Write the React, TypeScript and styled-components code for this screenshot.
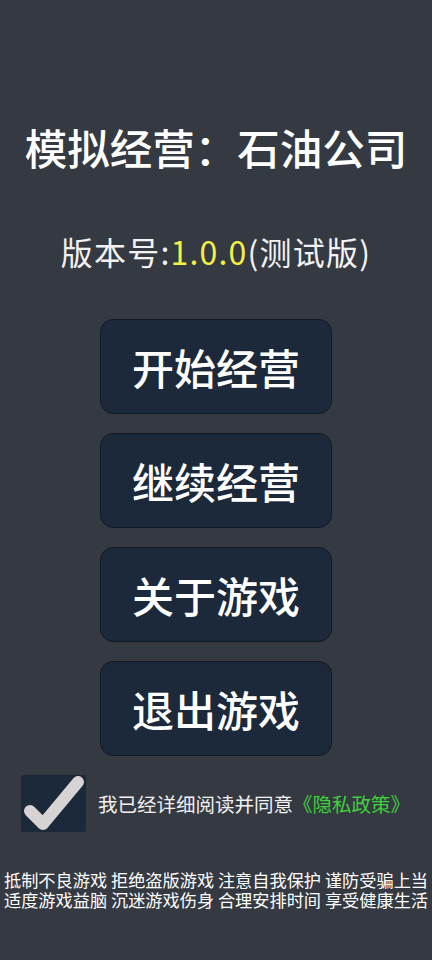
import React, { useState } from "react";
import styled, { createGlobalStyle } from "styled-components";

const Global = createGlobalStyle`
  html, body { margin: 0; padding: 0; background: #353942; }
  body { font-family: "Noto Sans CJK SC", "Noto Sans", sans-serif; }
`;

const Page = styled.div`
  width: 432px;
  min-height: 960px;
  background: #353942;
  display: flex;
  flex-direction: column;
  align-items: center;
  box-sizing: border-box;
  padding-top: 117px;
`;

const Title = styled.h1`
  margin: 0;
  font-size: 42.5px;
  line-height: 60px;
  font-weight: 500;
  color: #ffffff;
  white-space: nowrap;
`;

const Version = styled.div`
  margin-top: 54px;
  font-size: 32px;
  letter-spacing: 1.2px;
  line-height: 40px;
  color: #f2f2f2;
  white-space: nowrap;
`;

const Hl = styled.span`
  color: #f4f046;
`;

const Menu = styled.div`
  margin-top: 48px;
  display: flex;
  flex-direction: column;
  gap: 19px;
`;

const MenuButton = styled.button`
  width: 232px;
  height: 95px;
  border-radius: 13px;
  background: #1c293b;
  border: 1px solid #121a26;
  box-sizing: border-box;
  color: #ffffff;
  font-family: "Noto Sans CJK SC", "Noto Sans", sans-serif;
  font-size: 42px;
  font-weight: 500;
  display: flex;
  align-items: center;
  justify-content: center;
  padding: 0;
  cursor: pointer;
`;

const AgreeRow = styled.label`
  align-self: stretch;
  margin-top: 19px;
  padding-left: 21px;
  display: flex;
  align-items: center;
  gap: 12px;
  cursor: pointer;
`;

const Box = styled.span`
  position: relative;
  width: 65px;
  height: 57px;
  background: #1c293b;
  border-radius: 2px;
  flex: none;
`;

const Check = styled.svg`
  position: absolute;
  left: 0;
  top: -1px;
`;

const AgreeText = styled.span`
  font-size: 19.5px;
  line-height: 26px;
  color: #f2f2f2;
  white-space: nowrap;
`;

const Link = styled.span`
  color: #3fd13c;
`;

const Notice = styled.div`
  margin-top: 38px;
  font-size: 17.2px;
  line-height: 20px;
  color: #ffffff;
  text-align: center;
  white-space: nowrap;
`;

export default function App() {
  const [checked, setChecked] = useState(true);
  const items = ["开始经营", "继续经营", "关于游戏", "退出游戏"];
  return (
    <>
      <Global />
      <Page>
        <Title>模拟经营：石油公司</Title>
        <Version>
          版本号:<Hl>1.0.0</Hl>(测试版)
        </Version>
        <Menu>
          {items.map((t) => (
            <MenuButton key={t}>{t}</MenuButton>
          ))}
        </Menu>
        <AgreeRow onClick={() => setChecked(!checked)}>
          <Box>
            {checked && (
              <Check width="65" height="58" viewBox="0 0 65 58">
                <path
                  d="M9 37 L22 50 L57 8"
                  fill="none"
                  stroke="#d8d3d3"
                  strokeWidth="12"
                  strokeLinecap="round"
                  strokeLinejoin="round"
                />
              </Check>
            )}
          </Box>
          <AgreeText>
            我已经详细阅读并同意<Link>《隐私政策》</Link>
          </AgreeText>
        </AgreeRow>
        <Notice>
          抵制不良游戏 拒绝盗版游戏 注意自我保护 谨防受骗上当
          <br />
          适度游戏益脑 沉迷游戏伤身 合理安排时间 享受健康生活
        </Notice>
      </Page>
    </>
  );
}
